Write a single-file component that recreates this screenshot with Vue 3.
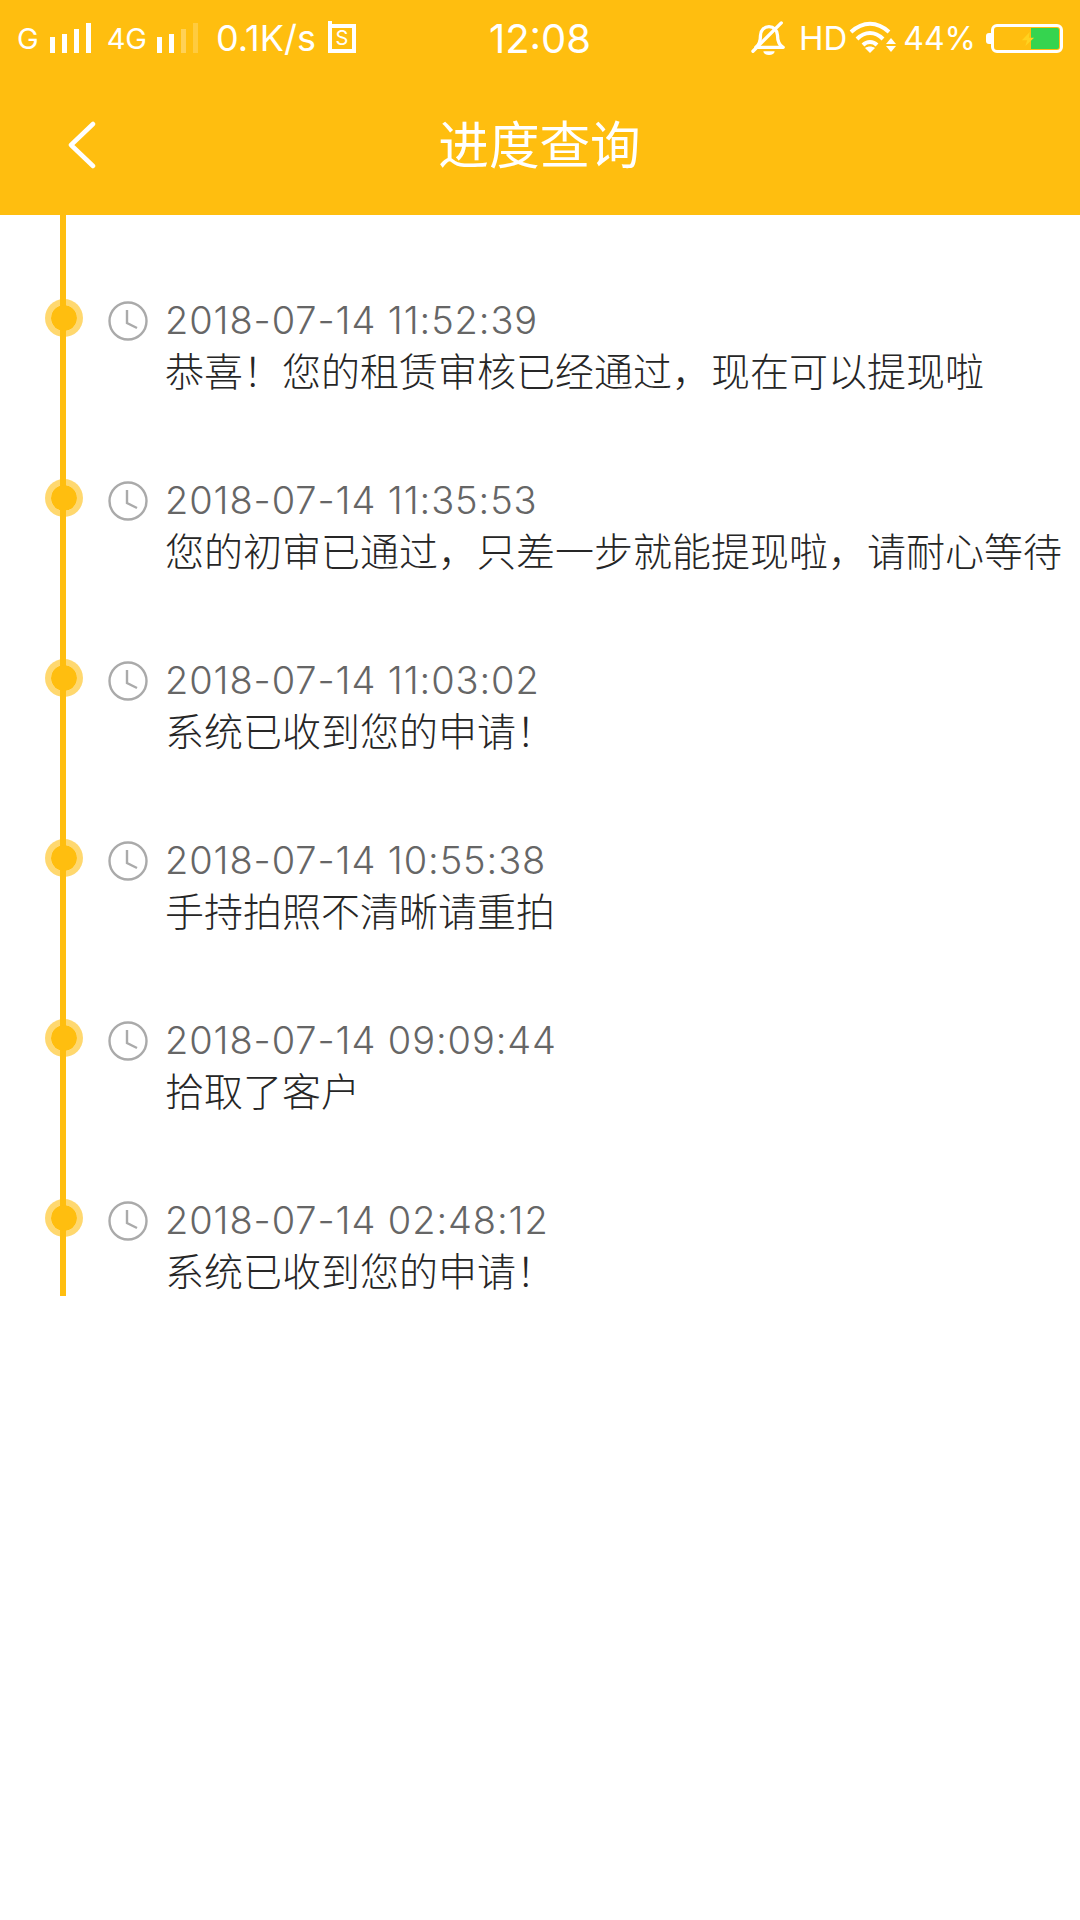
<script setup>
// full-width punctuation kept as escapes so it can't get normalised to ASCII
const BANG = '\uFF01';
const COMMA = '\uFF0C';

const records = [
  { time: '2018-07-14 11:52:39', text: `恭喜${BANG}您的租赁审核已经通过${COMMA}现在可以提现啦` },
  { time: '2018-07-14 11:35:53', text: `您的初审已通过${COMMA}只差一步就能提现啦${COMMA}请耐心等待` },
  { time: '2018-07-14 11:03:02', text: `系统已收到您的申请${BANG}` },
  { time: '2018-07-14 10:55:38', text: '手持拍照不清晰请重拍' },
  { time: '2018-07-14 09:09:44', text: '拾取了客户' },
  { time: '2018-07-14 02:48:12', text: `系统已收到您的申请${BANG}` }
];
</script>

<template>
  <div class="page">
    <header class="header">
      <div class="status-bar">
        <div class="status-left">
          <span class="net">G</span>
          <svg class="signal" width="41" height="30" viewBox="0 0 41 30">
            <rect x="0" y="14" width="5" height="16" fill="#fff" />
            <rect x="12" y="11" width="5" height="19" fill="#fff" />
            <rect x="24" y="6" width="5" height="24" fill="#fff" />
            <rect x="36" y="0" width="5" height="30" fill="#fff" />
          </svg>
          <span class="net net-4g">4G</span>
          <svg class="signal signal-2" width="41" height="30" viewBox="0 0 41 30">
            <rect x="0" y="14" width="5" height="16" fill="#fff" />
            <rect x="12" y="11" width="5" height="19" fill="#fff" />
            <rect x="24" y="6" width="5" height="24" fill="#fff" opacity="0.3" />
            <rect x="36" y="0" width="5" height="30" fill="#fff" opacity="0.2" />
          </svg>
          <span class="speed">0.1K/s</span>
          <span class="sim">S</span>
        </div>
        <div class="status-time">12:08</div>
        <div class="status-right">
          <svg width="36" height="34" viewBox="0 0 38 36" fill="none">
            <path d="M5 28c4-3 5-7 5-13 0-5 4-9 9-9s9 4 9 9c0 6 1 10 6 13z" stroke="#fff" stroke-width="3.5" stroke-linejoin="round" />
            <path d="M13 32a6 4 0 0 0 12 0z" fill="#fff" />
            <path d="M2 32L32 2" stroke="#fff" stroke-width="3.5" stroke-linecap="round" />
          </svg>
          <span class="hd">HD</span>
          <svg class="wifi" width="48" height="34" viewBox="0 0 48 34" fill="none">
            <path d="M2 11C14 0 28 0 40 11" stroke="#fff" stroke-width="4" />
            <path d="M8 18C16 10 26 10 34 18" stroke="#fff" stroke-width="4" />
            <path d="M14 24C18 20 24 20 28 24" stroke="#fff" stroke-width="4" />
            <path d="M16 27C19 25 23 25 26 27L21 32z" fill="#fff" />
            <path d="M42 17l5 6H37z" fill="#fff" />
            <path d="M37 25h10l-5 6z" fill="#fff" />
          </svg>
          <span class="battery-text">44%</span>
          <div class="battery">
            <svg class="bolt" width="14" height="14" viewBox="0 0 16 22" preserveAspectRatio="none">
              <path d="M10 0L1 13h6l-2 9 10-13H9z" fill="#ffd21f" />
            </svg>
            <div class="battery-fill"></div>
          </div>
        </div>
      </div>
      <div class="nav-bar">
        <svg class="back" width="32" height="48" viewBox="0 0 32 48" fill="none">
          <path d="M27 3L5 24l22 21" stroke="#fff" stroke-width="4.5" stroke-linecap="round" stroke-linejoin="round" />
        </svg>
        <h1 class="title">进度查询</h1>
      </div>
    </header>

    <div class="timeline">
      <div v-for="item in records" :key="item.time" class="record">
        <span class="dot"></span>
        <div class="time-row">
          <svg class="clock" width="40" height="40" viewBox="0 0 40 40" fill="none">
            <circle cx="20" cy="20" r="18.5" stroke="#aaa" stroke-width="2.4" />
            <path d="M19 9v13l10 5" stroke="#aaa" stroke-width="2.4" />
          </svg>
          <span class="time">{{ item.time }}</span>
        </div>
        <p class="desc">{{ item.text }}</p>
      </div>
    </div>
  </div>
</template>

<style scoped>
.page {
  width: 1080px;
  height: 1920px;
  background: #fff;
  font-family: "Noto Sans CJK SC", "Noto Sans", sans-serif;
  overflow: hidden;
}

.header {
  height: 215px;
  background: #ffbe0f;
  color: #fff;
  box-sizing: border-box;
}

.status-bar {
  height: 76px;
  display: flex;
  align-items: center;
  padding: 0 17px;
  font-family: Inter, "Noto Sans", sans-serif;
}

.status-left,
.status-right {
  flex: 1;
  display: flex;
  align-items: center;
}

.status-right {
  justify-content: flex-end;
}

.net {
  font-size: 29px;
}

.signal {
  margin-left: 11px;
}

.net-4g {
  margin-left: 16px;
}

.signal-2 {
  margin-left: 10px;
}

.speed {
  font-size: 36px;
  margin-left: 18px;
}

.sim {
  position: relative;
  width: 28px;
  height: 29px;
  box-sizing: border-box;
  border: 4px solid #fff;
  margin-left: 12px;
  font-size: 20px;
  line-height: 20px;
  text-align: center;
}

.sim::before {
  content: "";
  position: absolute;
  left: -4px;
  top: -7px;
  width: 4px;
  height: 4px;
  background: #fff;
}

.status-time {
  font-size: 40px;
  width: 140px;
  text-align: center;
}

.hd {
  font-size: 33px;
  margin-left: 12px;
}

.wifi {
  margin-left: 2px;
}

.battery-text {
  font-size: 32px;
  margin-left: 6px;
}

.battery {
  position: relative;
  width: 72px;
  height: 29px;
  box-sizing: border-box;
  border: 3px solid #fff;
  border-radius: 6px;
  margin-left: 15px;
  display: flex;
  justify-content: flex-end;
  padding: 1px;
}

.battery::before {
  content: "";
  position: absolute;
  left: -8px;
  top: 6px;
  width: 5px;
  height: 11px;
  background: #fff;
  border-radius: 3px 0 0 3px;
}

.battery-fill {
  width: 28px;
  background: #35d44f;
  border-radius: 0 2px 2px 0;
}

.bolt {
  position: absolute;
  left: 27px;
  top: 5px;
}

.nav-bar {
  position: relative;
  height: 139px;
  display: flex;
  align-items: center;
  justify-content: center;
}

.back {
  position: absolute;
  left: 66px;
  top: 45px;
}

.title {
  margin: 0 1px 0 0;
  font-size: 50.6px;
  font-weight: 400;
  line-height: 70px;
  transform: translateY(-4px);
}

.timeline {
  width: 1020px;
  margin-left: 60px;
  border-left: 6px solid #ffbe0f;
  padding-top: 80px;
  box-sizing: border-box;
  height: 1081px;
}

.record {
  position: relative;
  height: 102px;
  margin-bottom: 78px;
  padding-left: 42px;
}

.dot {
  position: absolute;
  left: -21px;
  top: 4px;
  width: 26px;
  height: 26px;
  background: #ffbe0f;
  background-clip: padding-box;
  border: 6.5px solid rgba(255, 190, 15, 0.6);
  border-radius: 50%;
}

.time-row {
  display: flex;
  align-items: center;
  height: 51px;
}

.clock {
  flex-shrink: 0;
}

.time {
  margin-left: 17px;
  font-size: 38px;
  letter-spacing: 0.9px;
  line-height: 44px;
  color: #666;
  font-family: Inter, "Noto Sans", sans-serif;
  font-weight: 300;
  transform: translateY(-1px);
}

.desc {
  margin: 0;
  padding-left: 57px;
  font-size: 39px;
  line-height: 47px;
  font-weight: 300;
  color: #262626;
  white-space: nowrap;
}
</style>
